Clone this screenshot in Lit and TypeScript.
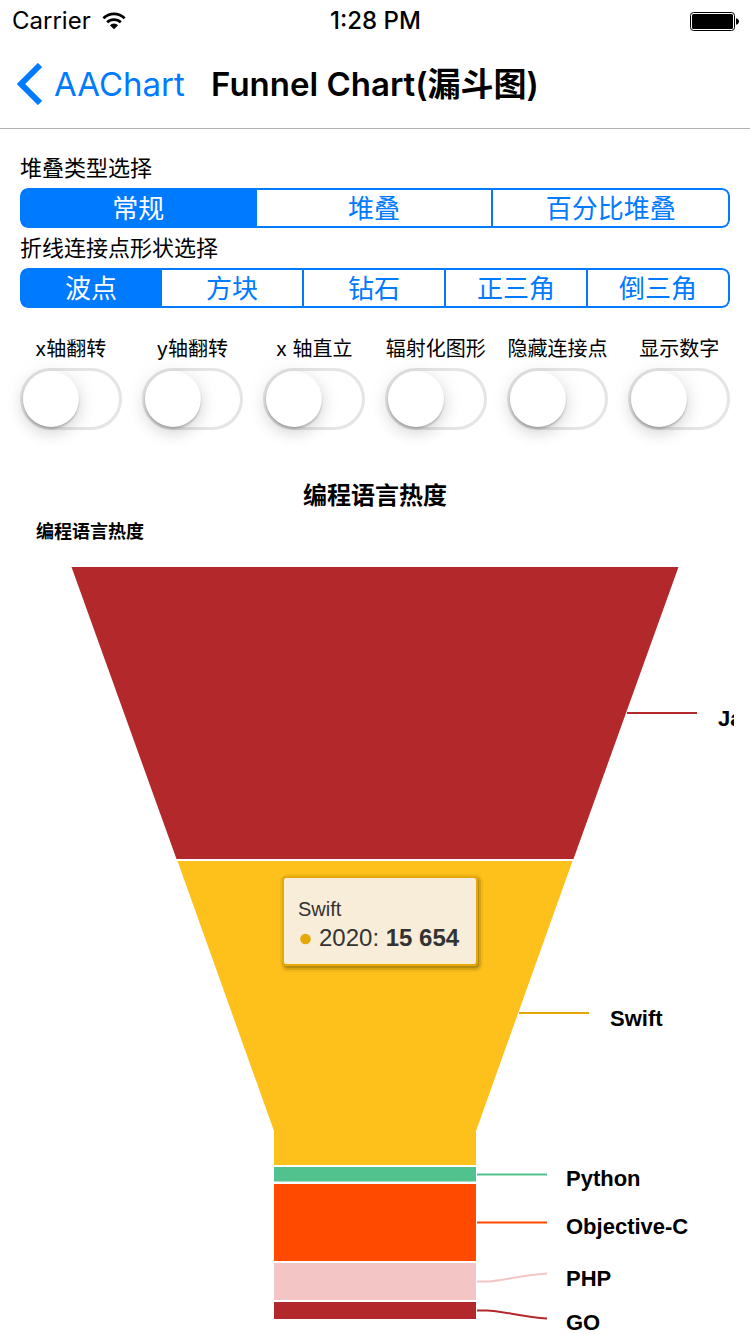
import { LitElement, html, svg, css } from "lit";
import { customElement, property, state } from "lit/decorators.js";

interface Slice {
  name: string;
  color: string;
  points: string;
  connector: string;
  line: string;
  labelX: number;
  labelY: number;
}

const SLICES: Slice[] = [
  { name: "Java", color: "#b2282b", points: "55.5,5 662.5,5 557.5,297 160.5,297", connector: "M611 151H681", line: "#b2282b", labelX: 702, labelY: 164 },
  { name: "Swift", color: "#fec11b", points: "161.5,299 556.5,299 460,569 460,603 258,603 258,569", connector: "M503 451H573", line: "#e5a807", labelX: 594, labelY: 464 },
  { name: "Python", color: "#51c18d", points: "258,605 460,605 460,619.5 258,619.5", connector: "M461 612.5H531", line: "#51c18d", labelX: 550, labelY: 624 },
  { name: "Objective-C", color: "#ff4a00", points: "258,622 460,622 460,699 258,699", connector: "M461 660.5H531", line: "#ff4a00", labelX: 550, labelY: 672 },
  { name: "PHP", color: "#f3c5c5", points: "258,701 460,701 460,738 258,738", connector: "M461 719.5H471C482 719.5 505 713 531 711.5", line: "#f3c5c5", labelX: 550, labelY: 724 },
  { name: "GO", color: "#b2282b", points: "258,740 460,740 460,757 258,757", connector: "M461 748.5H471C484 748.5 507 755 531 756.5", line: "#b2282b", labelX: 550, labelY: 768 },
];

@customElement("segmented-control")
export class SegmentedControl extends LitElement {
  @property() label = "";
  @property({ type: Array }) options: string[] = [];
  @state() private selected = 0;

  static styles = css`
    :host { display: block; }
    fieldset { border: 0; margin: 0; padding: 0; min-width: 0; }
    legend { padding: 0; font-size: 22px; line-height: 40px; color: #000; }
    .track {
      display: grid;
      grid-template-rows: 40px;
      grid-auto-flow: column;
      grid-auto-columns: minmax(0, 1fr);
      border-radius: 8px;
      overflow: hidden;
      font-size: 26px;
      line-height: 38px;
      text-align: center;
      color: #007aff;
    }
    .segment {
      position: relative;
      box-sizing: border-box;
      border: 2px solid #007aff;
      border-left-width: 0;
      cursor: pointer;
    }
    .segment:first-child { border-left-width: 2px; border-radius: 8px 0 0 8px; }
    .segment:last-child { border-radius: 0 8px 8px 0; }
    .segment:has(input:checked) { background: #007aff; color: #fff; }
    input { position: absolute; inset: 0; margin: 0; width: 100%; height: 100%; opacity: 0; }
  `;

  render() {
    return html`
      <fieldset>
        <legend>${this.label}</legend>
        <div class="track">
          ${this.options.map((option, i) => html`
            <label class="segment">
              <input type="radio" name="segment" .checked=${i === this.selected} @change=${() => (this.selected = i)} />
              ${option}
            </label>`)}
        </div>
      </fieldset>`;
  }
}

@customElement("funnel-chart")
export class FunnelChart extends LitElement {
  static styles = css`
    :host { display: block; }
    svg { display: block; width: 100%; height: auto; overflow: hidden; }
    .name { font: 700 22px "Liberation Sans", Arial, sans-serif; fill: #000; }
    .tip-name { font: 20px "Liberation Sans", Arial, sans-serif; fill: #333; }
    .tip-value { font: 24px "Liberation Sans", Arial, sans-serif; fill: #333; }
    .strong { font-weight: 700; }
    .connector { fill: none; stroke-width: 2; }
    .shadow { fill: none; stroke: #000; }
    .tip-box { fill: #f8edd8; stroke: #e5a807; stroke-width: 2; }
    .bullet { fill: #e5a807; }
  `;

  render() {
    return html`
      <svg viewBox="0 0 718 772" role="img" aria-label="编程语言热度">
        ${SLICES.map((s) => svg`
          <polygon points=${s.points} fill=${s.color}></polygon>
          <path class="connector" d=${s.connector} stroke=${s.line}></path>
          <text class="name" x=${s.labelX} y=${s.labelY}>${s.name}</text>`)}
        ${[10, 6, 2].map((w, i) => svg`
          <rect class="shadow" x="269" y="317" width="193" height="88" rx="3" stroke-width=${w} stroke-opacity=${0.05 * (i + 1)}></rect>`)}
        <rect class="tip-box" x="267" y="315" width="194" height="88" rx="3"></rect>
        <text class="tip-name" x="282" y="354">Swift</text>
        <circle class="bullet" cx="289.5" cy="377" r="5.3"></circle>
        <text class="tip-value" x="303" y="384">2020: <tspan class="strong">15 654</tspan></text>
      </svg>`;
  }
}

@customElement("app-root")
export class AppRoot extends LitElement {
  static styles = css`
    :host {
      display: block;
      min-height: 100vh;
      background: #fff;
      color: #000;
      font-family: Inter, "Noto Sans CJK SC", sans-serif;
    }
    .status {
      display: grid;
      grid-template-columns: 1fr auto 1fr;
      align-items: center;
      padding: 2px 11px 0 12px;
      font-size: 24px;
      line-height: 38px;
    }
    .carrier { display: flex; align-items: center; gap: 11px; }
    .time { font-weight: 500; }
    .battery { justify-self: end; }
    .nav {
      display: grid;
      grid-template-columns: 1fr auto 1fr;
      align-items: center;
      height: 88px;
      padding: 0 16px;
      box-shadow: 0 1px #b2b2b2;
    }
    .back {
      display: flex;
      align-items: center;
      gap: 12px;
      color: #007aff;
      text-decoration: none;
      font-size: 33px;
      line-height: 40px;
    }
    h1 { margin: 0; font-size: 33px; line-height: 40px; font-weight: 600; white-space: nowrap; }
    .controls { padding: 20px 20px 0; }
    .switches {
      display: grid;
      grid-template-columns: repeat(6, minmax(0, 1fr));
      gap: 20px;
      padding-top: 22px;
    }
    .switch {
      display: flex;
      flex-direction: column;
      align-items: center;
      font-size: 20px;
      line-height: 38px;
      white-space: nowrap;
    }
    .toggle {
      appearance: none;
      box-sizing: border-box;
      width: 100%;
      max-width: 102px;
      height: 62px;
      margin: 0;
      border: 3px solid #e5e5e5;
      border-radius: 31px;
      background: #fff;
      cursor: pointer;
    }
    .toggle::before {
      content: "";
      display: block;
      width: 56px;
      height: 56px;
      border-radius: 50%;
      background: #fff;
      box-shadow: 0 6px 16px rgba(0, 0, 0, 0.15), 0 2px 2px rgba(0, 0, 0, 0.2), 0 0 28px rgba(0, 0, 0, 0.05);
    }
    .toggle:checked { background: #4cd964; border-color: #4cd964; }
    .toggle:checked::before { margin-left: auto; }
    .chart { margin: 0 16px; padding-top: 46px; }
    .title { margin: 0; text-align: center; font-size: 24px; line-height: 40px; font-weight: 700; }
    .subtitle { margin: 0; padding: 0 20px 14px; font-size: 18px; line-height: 32px; font-weight: 700; }
  `;

  private switches = ["x轴翻转", "y轴翻转", "x 轴直立", "辐射化图形", "隐藏连接点", "显示数字"];

  render() {
    return html`
      <div class="status">
        <span class="carrier">Carrier
          <svg width="24" height="18" viewBox="0 0 26 18" aria-hidden="true">
            <path d="M1.5 6A16.5 16.5 0 0 1 24.5 6" fill="none" stroke="#000" stroke-width="3"/>
            <path d="M5.6 10.4A10.6 10.6 0 0 1 20.4 10.4" fill="none" stroke="#000" stroke-width="3"/>
            <path d="M8.6 13.6A6.2 6.2 0 0 1 17.4 13.6L13 18Z"/>
          </svg>
        </span>
        <span class="time">1:28 PM</span>
        <svg class="battery" width="49" height="19" viewBox="0 0 49 19" aria-hidden="true">
          <rect x="0.5" y="0.5" width="44" height="18" rx="3" fill="none" stroke="#000"/>
          <rect x="2" y="2" width="41" height="15" rx="1.5"/>
          <path d="M46 6.2C48 6.8 49 8 49 9.5S48 12.2 46 12.8Z"/>
        </svg>
      </div>
      <nav class="nav">
        <a class="back" href="#">
          <svg width="26" height="42" viewBox="0 0 26 42" aria-hidden="true">
            <path d="M24 2L5 21L24 40" fill="none" stroke="#007aff" stroke-width="6"/>
          </svg>AAChart</a>
        <h1>Funnel Chart(漏斗图)</h1>
      </nav>
      <main>
        <section class="controls">
          <segmented-control label="堆叠类型选择" .options=${["常规", "堆叠", "百分比堆叠"]}></segmented-control>
          <segmented-control label="折线连接点形状选择" .options=${["波点", "方块", "钻石", "正三角", "倒三角"]}></segmented-control>
          <div class="switches">
            ${this.switches.map((name) => html`
              <label class="switch">${name}<input class="toggle" type="checkbox" role="switch" /></label>`)}
          </div>
        </section>
        <section class="chart">
          <h2 class="title">编程语言热度</h2>
          <h3 class="subtitle">编程语言热度</h3>
          <funnel-chart></funnel-chart>
        </section>
      </main>`;
  }
}
